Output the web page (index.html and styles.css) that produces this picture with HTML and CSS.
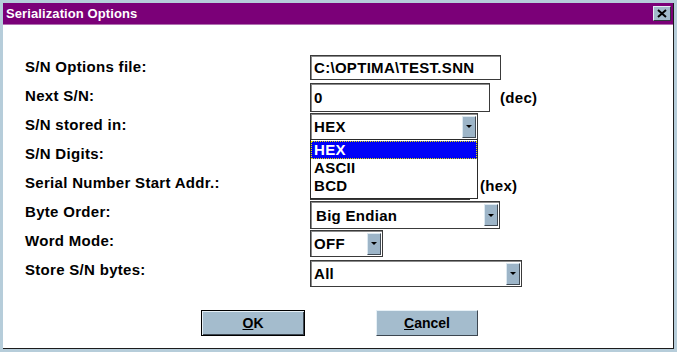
FILE: index.html
```html
<!DOCTYPE html>
<html lang="en">
<head>
    <meta charset="UTF-8">
    <title>Serialization Options</title>
    <link rel="stylesheet" href="styles.css">
</head>
<body>
    <div class="window">
        <div class="frame">
            <div class="titlebar">
                <span class="title">Serialization Options</span>
                <button class="close" type="button">
                    <svg width="10" height="9" viewBox="0 0 10 9"><path d="M1 1 L9 8 M9 1 L1 8" stroke="#000" stroke-width="2" fill="none"/></svg>
                </button>
            </div>

            <div class="client">
                <div class="form">
                    <label>S/N Options file:</label>
                    <div class="cell">
                        <div class="textbox w-file">C:\OPTIMA\TEST.SNN</div>
                    </div>

                    <label>Next S/N:</label>
                    <div class="cell cell-tight">
                        <div class="textbox w-next tall">0</div>
                        <span class="unit">(dec)</span>
                    </div>

                    <label>S/N stored in:</label>
                    <div class="cell">
                        <div class="combo w-stored">
                            <span>HEX</span>
                            <span class="arrow"><i></i></span>
                            <!-- open drop-down list -->
                            <ul class="droplist">
                                <li class="selected">HEX</li>
                                <li>ASCII</li>
                                <li>BCD</li>
                            </ul>
                        </div>
                    </div>

                    <label>S/N Digits:</label>
                    <div class="cell">
                        <div class="textbox w-hidden"></div>
                    </div>

                    <label>Serial Number Start Addr.:</label>
                    <div class="cell">
                        <div class="textbox w-hidden"></div>
                        <span class="unit">(hex)</span>
                    </div>

                    <label>Byte Order:</label>
                    <div class="cell cell-low">
                        <div class="combo w-order">
                            <span>Big Endian</span>
                            <span class="arrow"><i></i></span>
                        </div>
                    </div>

                    <label>Word Mode:</label>
                    <div class="cell cell-low">
                        <div class="combo w-word">
                            <span>OFF</span>
                            <span class="arrow"><i></i></span>
                        </div>
                    </div>

                    <label>Store S/N bytes:</label>
                    <div class="cell cell-lower">
                        <div class="combo w-store">
                            <span>All</span>
                            <span class="arrow"><i></i></span>
                        </div>
                    </div>
                </div>

                <div class="actions">
                    <button class="btn btn-default" type="button"><u>O</u>K</button>
                    <button class="btn" type="button"><u>C</u>ancel</button>
                </div>
            </div>
        </div>
    </div>
</body>
</html>
```

FILE: styles.css
```css
body {
    margin: 0;
    font-family: "Liberation Sans", Arial, sans-serif;
    font-weight: bold;
    background: #fff;
}
.window {
    width: 677px;
    height: 352px;
    box-sizing: border-box;
    padding: 3px;
    background: #b6cdda;
}
.frame {
    height: 100%;
    box-sizing: border-box;
    border-right: 1px solid #1c1c1c;
    border-bottom: 1px solid #1c1c1c;
    background: #fff;
    display: flex;
    flex-direction: column;
}

/* Title bar */
.titlebar {
    height: 21px;
    background: #7b0078;
    border-bottom: 1px solid #b070b0;
    display: flex;
    align-items: center;
    justify-content: space-between;
    padding: 0 2px 0 3px;
}
.title {
    color: #fff;
    font-size: 13px;
    letter-spacing: 0.1px;
}
.close {
    width: 18px;
    height: 15px;
    padding: 0;
    background: #a2bacb;
    border: 1px solid;
    border-color: #e4eef4 #303840 #303840 #e4eef4;
    display: flex;
    align-items: center;
    justify-content: center;
}

/* Form */
.client {
    flex: 1;
    padding: 28px 0 0 22px;
}
.form {
    display: grid;
    grid-template-columns: 285px 1fr;
    grid-auto-rows: 29px;
    font-size: 15px;
    letter-spacing: 0.3px;
    color: #000;
}
.form label {
    align-self: center;
    padding-bottom: 2px;
}
.cell {
    display: flex;
    align-items: center;
    align-self: start;
    gap: 10px;
    margin-top: 2px;
}
.cell-tight { margin-top: 1px; }
.cell-low { margin-top: 3px; }
.cell-lower { margin-top: 4px; }

.textbox, .combo {
    box-sizing: border-box;
    height: 27px;
    border: 1px solid #3a3a3a;
    box-shadow: inset 1px 1px 0 #8a8a8a;
    background: #fff;
    display: flex;
    align-items: center;
    padding-left: 3px;
}
.textbox { height: 25px; }
.textbox.tall { height: 29px; }
.w-file { width: 191px; }
.w-next { width: 180px; }
.w-hidden { width: 160px; height: 29px; }
.w-stored { width: 168px; }
.w-order { width: 190px; height: 28px; padding-left: 5px; }
.w-word { width: 73px; }
.w-store { width: 212px; }

.unit { font-size: 15px; }

.combo {
    position: relative;
    justify-content: space-between;
    padding-right: 1px;
}
.arrow {
    width: 14px;
    height: 22px;
    box-sizing: border-box;
    background: #9db5c8;
    border: 1px solid;
    border-color: #dce8f0 #404a54 #404a54 #dce8f0;
    display: flex;
    align-items: center;
    justify-content: center;
}
.arrow i {
    width: 0;
    height: 0;
    border-left: 3px solid transparent;
    border-right: 3px solid transparent;
    border-top: 3px solid #000;
}

/* Open list of the combo box */
.droplist {
    position: absolute;
    top: 100%;
    left: -1px;
    width: 168px;
    box-sizing: border-box;
    margin: 0;
    padding: 1px 0 3px;
    list-style: none;
    background: #fff;
    border: 1px solid #2a2a2a;
    z-index: 2;
}
.droplist li {
    height: 18px;
    line-height: 18px;
    padding-left: 3px;
}
.droplist li.selected {
    background: #0000f8;
    color: #fff;
    outline: 1px dotted #e8e000;
    outline-offset: -1px;
}

/* Buttons */
.actions {
    display: flex;
    justify-content: center;
    gap: 71px;
    margin: 25px 0 0 -19px;
}
.btn {
    width: 102px;
    height: 26px;
    background: #a4bccd;
    border: 1px solid;
    border-color: #e6f0f6 #3c4650 #3c4650 #e6f0f6;
    font-family: "Liberation Sans", Arial, sans-serif;
    font-weight: bold;
    font-size: 14px;
    color: #000;
    padding: 0;
}
.btn u { text-underline-offset: 1px; }
.btn-default {
    width: 104px;
    border: 1px solid #000;
    box-shadow: inset 1px 1px 0 #e6f0f6, inset -1px -1px 0 #3c4650;
}
```
